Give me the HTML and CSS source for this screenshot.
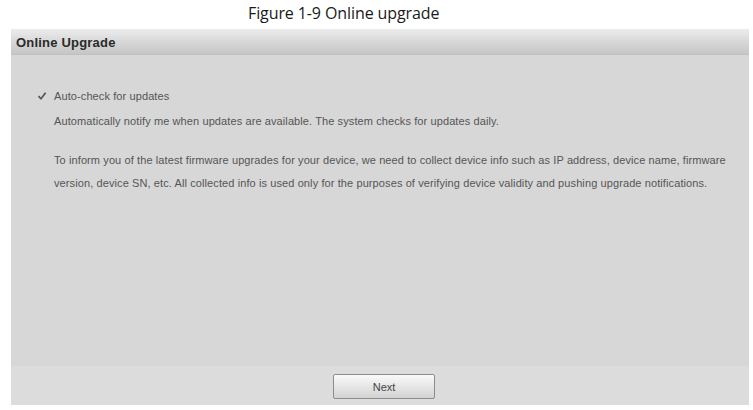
FILE: index.html
```html
<!DOCTYPE html>
<html>
<head>
<meta charset="utf-8">
<link rel="stylesheet" href="styles.css">
</head>
<body>
<div class="caption">Figure 1-9 Online upgrade</div>
<div class="panel">
  <div class="panel-head">Online Upgrade</div>
  <div class="panel-body">
    <div class="check-row">
      <span class="check">
        <svg width="10" height="10" viewBox="0 0 10 10"><path d="M1.5 5.2 L4 7.8 L8.6 1.8" fill="none" stroke="#555" stroke-width="1.7"/></svg>
      </span>
      <span>Auto-check for updates</span>
    </div>
    <p class="line">Automatically notify me when updates are available. The system checks for updates daily.</p>
    <p class="para">To inform you of the latest firmware upgrades for your device, we need to collect device info such as IP address, device name, firmware version, device SN, etc. All collected info is used only for the purposes of verifying device validity and pushing upgrade notifications.</p>
  </div>
  <div class="panel-foot">
    <button class="btn">Next</button>
  </div>
</div>
</body>
</html>
```
FILE: styles.css
```css
html, body { margin: 0; padding: 0; background: #ffffff; }
body { width: 753px; height: 410px; overflow: hidden; font-family: "Liberation Sans", Arial, sans-serif; }
.caption {
  height: 29px;
  box-sizing: border-box;
  padding-top: 2px;
  padding-left: 248px;
  font-family: "Open Sans", "Noto Sans", sans-serif;
  font-size: 16px;
  line-height: 22px;
  color: #1a1a1a;
  letter-spacing: -0.1px;
}
.panel {
  margin-left: 11px;
  width: 738px;
  height: 376px;
  display: flex;
  flex-direction: column;
  background: #d7d7d7;
}
.panel-head {
  height: 26px;
  box-sizing: border-box;
  padding: 6px 0 0 5px;
  font-size: 13px;
  letter-spacing: 0.2px;
  font-weight: bold;
  color: #2a2a2a;
  background: linear-gradient(#ececec, #d4d4d4 60%, #c6c6c6);
  border-bottom: 1px solid #c0c0c0;
}
.panel-body {
  flex: 1;
  padding: 34px 0 0 43px;
  font-size: 11px;
  letter-spacing: 0.1px;
  color: #555;
}
.check-row { display: flex; align-items: center; margin-left: -17px; height: 14px; }
.check { width: 10px; height: 10px; margin-right: 7px; display: flex; }
.line { margin: 11px 0 0 0; line-height: 14px; }
.para { margin: 21px 0 0 0; line-height: 23px; width: 690px; }
.panel-foot {
  height: 39px;
  background: #dcdcdc;
  display: flex;
  justify-content: center;
  padding-top: 8px;
  box-sizing: border-box;
  padding-left: 8px;
}
.btn {
  width: 102px;
  height: 25px;
  border: 1px solid #8c8c8c;
  border-radius: 2px;
  background: linear-gradient(#fafafa, #e6e6e6 50%, #d2d2d2);
  font-family: "Liberation Sans", Arial, sans-serif;
  font-size: 11px;
  color: #444;
  padding: 0;
}
```
